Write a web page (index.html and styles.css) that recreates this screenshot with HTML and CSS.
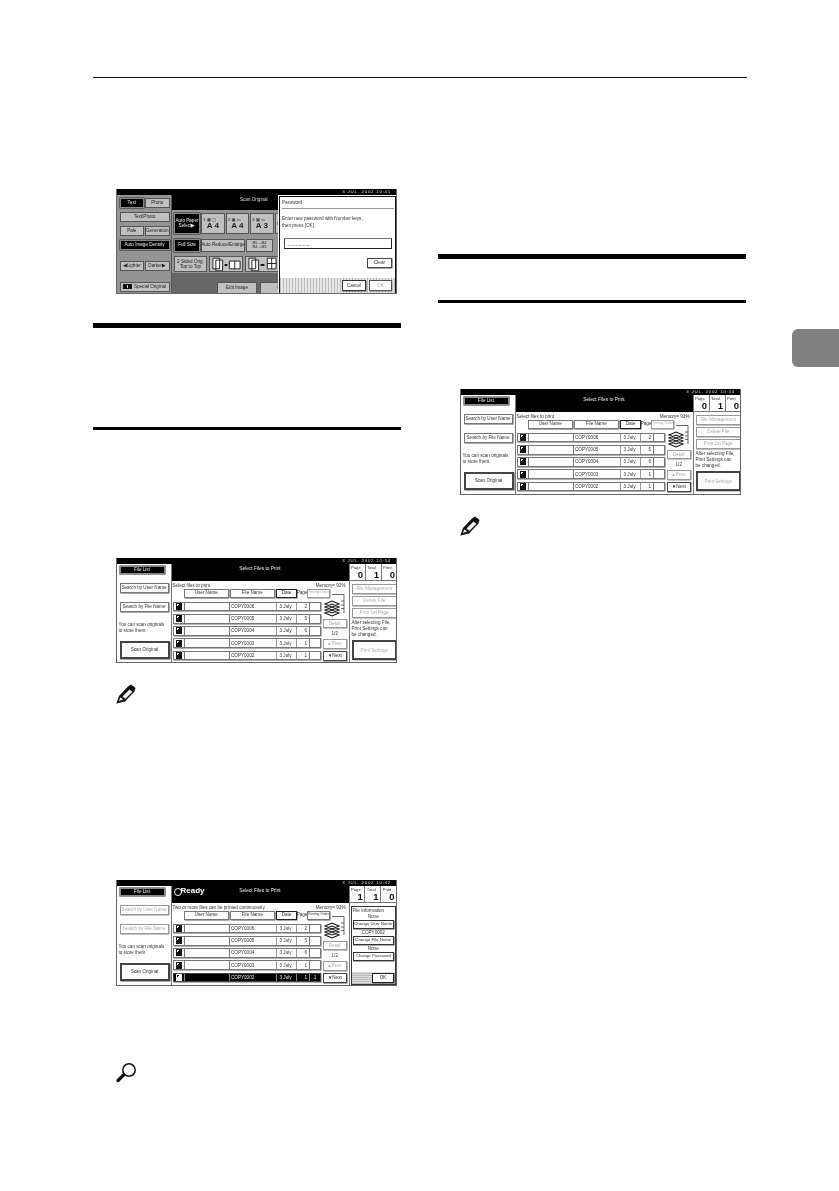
FILE: index.html
```html
<!DOCTYPE html>
<html lang="en">
<head>
<meta charset="utf-8">
<title>Select Files to Print</title>
<link rel="stylesheet" href="styles.css">
</head>
<body>
<div class="page">
  <div class="top-rule"></div>
  <div class="tab"></div>
  <div class="columns">
    <div class="col">
      <div class="screen pw shot-1">
        <div class="bar"><span>3 JUL. 2002 10:41</span></div>
        <div class="pw-main">
          <div class="pw-left">
            <div class="pw-line"><span class="b blk">Text</span><span class="b gr">Photo</span></div>
            <div class="pw-line"><span class="b gr wide">Text/Photo</span></div>
            <div class="pw-line"><span class="b gr">Pale</span><span class="b gr">Generation</span></div>
            <div class="pw-line"><span class="b blk wide">Auto Image Density</span></div>
            <div class="pw-line pw-gap2"><span class="b gr">◀Lighter</span><span class="b gr">Darker▶</span></div>
            <div class="pw-line pw-gap3"><span class="b gr wide"><i class="so-ic"></i>Special Original</span></div>
          </div>
          <div class="pw-mid">
            <div class="pw-head">Scan Original</div>
            <div class="pw-papers">
              <span class="b blk aps">Auto Paper<br>Select▶</span>
              <span class="b gr paper"><small>1 ▦ ▢</small>A 4</span>
              <span class="b gr paper"><small>2 ▦ ▭</small>A 4</span>
              <span class="b gr paper"><small>3 ▦ ▭</small>A 3</span>
              <span class="b gr paper"><small>T</small></span>
            </div>
            <div class="pw-sizes">
              <span class="b blk aps">Full Size</span>
              <span class="b gr are">Auto Reduce/Enlarge</span>
              <span class="b gr b5">B5→B4<br>R4→B5</span>
            </div>
            <div class="pw-sides">
              <span class="b gr two">2 Sided Orig.<br>Top to Top</span>
              <span class="b gr dup"><svg viewBox="0 0 33 15" width="33" height="15"><path class="pgi" d="M3 2h7v11H3zM6 4h7v11H6zM20 5h11v8H20zM25.500 5v8"/><path class="fl" d="M15 8h3v2h-3z"/></svg></span>
              <span class="b gr dup"><svg viewBox="0 0 33 15" width="33" height="15"><path class="pgi" d="M3 2h7v11H3zM6 4h7v11H6zM22 2h9v11H22zM22 7.500h9M26.500 2v11"/><path class="fl" d="M15 8h4v2h-4z"/></svg></span>
            </div>
            <div class="pw-bottom"><span class="b gr edit">Edit Image</span><span class="b gr cop">Co</span></div>
          </div>
        </div>
        <div class="dialog">
          <div class="d-title">Password</div>
          <div class="d-text">Enter new password with Number keys,<br>then press [OK].</div>
          <div class="d-input"><span>______</span></div>
          <div class="d-clear"><span class="b wh">Clear</span></div>
          <div class="d-foot"><span class="b wh">Cancel</span><span class="b wh dim">OK</span></div>
        </div>
      </div>
      <div class="rule-thick rule-a"></div>
      <div class="rule-thin rule-b"></div>

      <div class="screen fl-screen shot-2">
        <div class="bar"><span>3 JUL. 2002 10:34</span></div>
        <div class="fl-main">
          <div class="fl-left">
            <span class="b blk filelist">File List</span>
            <span class="b wh search s1">Search by User Name</span>
            <span class="b wh search s2">Search by File Name</span>
            <p class="hint">You can scan originals<br>to store them.</p>
            <span class="b wh scan">Scan Original</span>
          </div>
          <div class="fl-mid">
            <div class="fl-head"><span class="ready"></span><span class="head-title">Select Files to Print</span></div>
            <div class="info"><span>Select files to print.</span><span>Memory= 93%</span></div>
            <div class="cols"><span class="b wh h-user">User Name</span><span class="b wh h-file">File Name</span><span class="b wh h-date thick">Date</span><span class="h-page">Page</span><span class="b wh h-ord dim">Printing Order</span></div>
            <div class="fl-body">
              <div class="rows">
                <div class="row"><i class="ic"></i><span class="c-user"></span><span class="c-file">COPY0006</span><span class="c-date">3 July</span><span class="c-page">2</span><span class="c-ord"></span></div>
                <div class="row"><i class="ic"></i><span class="c-user"></span><span class="c-file">COPY0005</span><span class="c-date">3 July</span><span class="c-page">5</span><span class="c-ord"></span></div>
                <div class="row"><i class="ic"></i><span class="c-user"></span><span class="c-file">COPY0004</span><span class="c-date">3 July</span><span class="c-page">6</span><span class="c-ord"></span></div>
                <div class="row"><i class="ic"></i><span class="c-user"></span><span class="c-file">COPY0003</span><span class="c-date">3 July</span><span class="c-page">1</span><span class="c-ord"></span></div>
                <div class="row"><i class="ic"></i><span class="c-user"></span><span class="c-file">COPY0002</span><span class="c-date">3 July</span><span class="c-page">1</span><span class="c-ord"></span></div>
              </div>
              <div class="side">
                <svg class="stack" viewBox="0 0 24 26" width="24" height="26"><path class="ol" d="M9 1.500H21V20M21 8h-3M21 12h-3M21 15.500h-3"/><path class="st" d="M2 20l7-3 7 3-7 3zM2 17l7-3 7 3-7 3zM2 14l7-3 7 3-7 3zM2 11l7-3 7 3-7 3z"/></svg>
                <span class="b wh sb dim">Detail</span>
                <span class="pg">1/2</span>
                <span class="b wh sb dim">▲Prev.</span>
                <span class="b wh sb nx">▼Next</span>
              </div>
            </div>
          </div>
          <div class="fl-right">
            <div class="counts"><div><span>Page</span><b>0</b></div><div><span>Total</span><b>1</b></div><div><span>Print</span><b>0</b></div></div>
            <span class="b wh rb dim">File Management</span>
            <span class="b wh rb dim">Delete File</span>
            <span class="b wh rb dim">Print 1st Page</span>
            <p class="hint rh">After selecting File,<br>Print Settings can<br>be changed.</p>
            <span class="b wh scan ps dim">Print Settings</span>
          </div>
        </div>
      </div>
      <svg class="note n-left" viewBox="0 0 20 20" width="20" height="20"><path class="fl" d="M0.500 19.500L3 12 12 2.500 15 .5l4.500 3.500-1 3.500L9 17.500z"/><path class="hl" d="M6.500 12.500L13.500 5.500l3 2.300-7.200 7.200z"/><path class="hl" d="M2.800 17l1.500-3.800 3 2.300z"/><path class="fl" d="M.5 19.500l1-2.800 1.800 1.500z"/></svg>

      <div class="screen fl-screen shot-3">
        <div class="bar"><span>3 JUL. 2002 10:42</span></div>
        <div class="fl-main">
          <div class="fl-left">
            <span class="b blk filelist">File List</span>
            <span class="b wh search s1 dim">Search by User Name</span>
            <span class="b wh search s2 dim">Search by File Name</span>
            <p class="hint">You can scan originals<br>to store them.</p>
            <span class="b wh scan">Scan Original</span>
          </div>
          <div class="fl-mid">
            <div class="fl-head"><span class="ready on">Ready</span><span class="head-title">Select Files to Print</span></div>
            <div class="info"><span>Two or more files can be printed continuously.</span><span>Memory= 93%</span></div>
            <div class="cols"><span class="b wh h-user">User Name</span><span class="b wh h-file">File Name</span><span class="b wh h-date thick">Date</span><span class="h-page">Page</span><span class="b wh h-ord">Printing Order</span></div>
            <div class="fl-body">
              <div class="rows">
                <div class="row"><i class="ic"></i><span class="c-user"></span><span class="c-file">COPY0006</span><span class="c-date">3 July</span><span class="c-page">2</span><span class="c-ord"></span></div>
                <div class="row"><i class="ic"></i><span class="c-user"></span><span class="c-file">COPY0005</span><span class="c-date">3 July</span><span class="c-page">5</span><span class="c-ord"></span></div>
                <div class="row"><i class="ic"></i><span class="c-user"></span><span class="c-file">COPY0004</span><span class="c-date">3 July</span><span class="c-page">6</span><span class="c-ord"></span></div>
                <div class="row"><i class="ic"></i><span class="c-user"></span><span class="c-file">COPY0003</span><span class="c-date">3 July</span><span class="c-page">1</span><span class="c-ord"></span></div>
                <div class="row sel"><i class="ic"></i><span class="c-user"></span><span class="c-file">COPY0002</span><span class="c-date">3 July</span><span class="c-page">1</span><span class="c-ord">1</span></div>
              </div>
              <div class="side">
                <svg class="stack" viewBox="0 0 24 26" width="24" height="26"><path class="ol" d="M9 1.500H21V20M21 8h-3M21 12h-3M21 15.500h-3"/><path class="st" d="M2 20l7-3 7 3-7 3zM2 17l7-3 7 3-7 3zM2 14l7-3 7 3-7 3zM2 11l7-3 7 3-7 3z"/></svg>
                <span class="b wh sb dim">Detail</span>
                <span class="pg">1/2</span>
                <span class="b wh sb dim">▲Prev.</span>
                <span class="b wh sb nx">▼Next</span>
              </div>
            </div>
          </div>
          <div class="fl-right">
            <div class="counts"><div><span>Page</span><b>1</b></div><div><span>Total</span><b>1</b></div><div><span>Print</span><b>0</b></div></div>
            <div class="fileinfo">
              <span class="fi-title">File Information</span>
              <span class="fi-val">None</span>
              <span class="b wh fi-btn">Change User Name</span>
              <span class="fi-val">COPY0002</span>
              <span class="b wh fi-btn">Change File Name</span>
              <span class="fi-val">None</span>
              <span class="b wh fi-btn">Change Password</span>
              <div class="fi-foot"><span class="b wh fi-ok">OK</span></div>
            </div>
          </div>
        </div>
      </div>
      <svg class="note m-left" viewBox="0 0 24 22" width="24" height="22"><circle class="lens" cx="16" cy="7" r="6.200"/><path class="handle" d="M10.500 12L5 17.500"/><path class="handle2" d="M11.500 11L9 13.500"/></svg>
    </div>

    <div class="col">
      <div class="rule-thick rule-c"></div>
      <div class="rule-thin rule-d"></div>
      <div class="screen fl-screen shot-4">
        <div class="bar"><span>3 JUL. 2002 10:34</span></div>
        <div class="fl-main">
          <div class="fl-left">
            <span class="b blk filelist">File List</span>
            <span class="b wh search s1">Search by User Name</span>
            <span class="b wh search s2">Search by File Name</span>
            <p class="hint">You can scan originals<br>to store them.</p>
            <span class="b wh scan">Scan Original</span>
          </div>
          <div class="fl-mid">
            <div class="fl-head"><span class="ready"></span><span class="head-title">Select Files to Print</span></div>
            <div class="info"><span>Select files to print.</span><span>Memory= 93%</span></div>
            <div class="cols"><span class="b wh h-user">User Name</span><span class="b wh h-file">File Name</span><span class="b wh h-date thick">Date</span><span class="h-page">Page</span><span class="b wh h-ord dim">Printing Order</span></div>
            <div class="fl-body">
              <div class="rows">
                <div class="row"><i class="ic"></i><span class="c-user"></span><span class="c-file">COPY0006</span><span class="c-date">3 July</span><span class="c-page">2</span><span class="c-ord"></span></div>
                <div class="row"><i class="ic"></i><span class="c-user"></span><span class="c-file">COPY0005</span><span class="c-date">3 July</span><span class="c-page">5</span><span class="c-ord"></span></div>
                <div class="row"><i class="ic"></i><span class="c-user"></span><span class="c-file">COPY0004</span><span class="c-date">3 July</span><span class="c-page">6</span><span class="c-ord"></span></div>
                <div class="row"><i class="ic"></i><span class="c-user"></span><span class="c-file">COPY0003</span><span class="c-date">3 July</span><span class="c-page">1</span><span class="c-ord"></span></div>
                <div class="row"><i class="ic"></i><span class="c-user"></span><span class="c-file">COPY0002</span><span class="c-date">3 July</span><span class="c-page">1</span><span class="c-ord"></span></div>
              </div>
              <div class="side">
                <svg class="stack" viewBox="0 0 24 26" width="24" height="26"><path class="ol" d="M9 1.500H21V20M21 8h-3M21 12h-3M21 15.500h-3"/><path class="st" d="M2 20l7-3 7 3-7 3zM2 17l7-3 7 3-7 3zM2 14l7-3 7 3-7 3zM2 11l7-3 7 3-7 3z"/></svg>
                <span class="b wh sb dim">Detail</span>
                <span class="pg">1/2</span>
                <span class="b wh sb dim">▲Prev.</span>
                <span class="b wh sb nx">▼Next</span>
              </div>
            </div>
          </div>
          <div class="fl-right">
            <div class="counts"><div><span>Page</span><b>0</b></div><div><span>Total</span><b>1</b></div><div><span>Print</span><b>0</b></div></div>
            <span class="b wh rb dim">File Management</span>
            <span class="b wh rb dim">Delete File</span>
            <span class="b wh rb dim">Print 1st Page</span>
            <p class="hint rh">After selecting File,<br>Print Settings can<br>be changed.</p>
            <span class="b wh scan ps dim">Print Settings</span>
          </div>
        </div>
      </div>
      <svg class="note n-right" viewBox="0 0 20 20" width="20" height="20"><path class="fl" d="M0.500 19.500L3 12 12 2.500 15 .5l4.500 3.500-1 3.500L9 17.500z"/><path class="hl" d="M6.500 12.500L13.500 5.500l3 2.300-7.200 7.200z"/><path class="hl" d="M2.800 17l1.500-3.800 3 2.300z"/><path class="fl" d="M.5 19.500l1-2.800 1.800 1.500z"/></svg>
    </div>
  </div>
</div>
</body>
</html>
```

FILE: styles.css
```css
* { box-sizing: border-box; }
html, body { margin: 0; padding: 0; background: #fff; }
body { font-family: "Liberation Sans", Arial, sans-serif; color: #111; }
.page { position: relative; width: 839px; height: 1191px; overflow: hidden; padding: 77px 92px 0 93px; }
.top-rule { height: 1px; background: #111; }
.tab { position: absolute; left: 792px; top: 329px; width: 47px; height: 38px; background: #808080; border-radius: 6px 0 0 6px; }
.columns { display: grid; grid-template-columns: 308px 309px; column-gap: 37px; }
.col { display: flex; flex-direction: column; align-items: flex-start; }

.rule-thick { width: 308px; height: 5px; background: #000; }
.rule-thin { width: 308px; height: 3px; background: #000; }
.rule-a { margin-top: 29px; }
.rule-b { margin-top: 99px; }
.rule-c { margin-top: 176px; }
.rule-d { margin-top: 41px; }

.screen { position: relative; width: 281px; height: 105px; flex: none; border: 1px solid #666; border-top: 0; background: #fff; font-size: 4.6px; line-height: 1.1; color: #333; filter: blur(.4px); overflow: hidden; }
.shot-1 { margin: 111px 0 0 23px; }
.shot-2 { margin: 128px 0 0 23px; }
.shot-3 { margin: 176px 0 0 23px; height: 106px; }
.shot-4 { margin: 86px 0 0 22px; height: 106px; }

.bar { height: 6px; background: #000; color: #ddd; text-align: right; padding-right: 5px; font-size: 4.4px; line-height: 6px; letter-spacing: .75px; }

.b { display: flex; align-items: center; justify-content: center; text-align: center; white-space: nowrap; }
.blk { background: #000; color: #eee; border: 1px solid #888; box-shadow: 0 0 0 .5px #222; }
.gr { background: #c0c0c0; color: #222; border: 1px solid #555; }
.wh { background: #fff; color: #333; border: 1px solid #777; box-shadow: .5px .5px 0 #555; }
.dim { color: #aaa; border-color: #999; box-shadow: .5px .5px 0 #888; }
.thick { border-width: 1.500px; border-color: #222; }
.hint { margin: 0; white-space: nowrap; }
.note { display: block; flex: none; }
.fl { fill: #111; }
.hl { fill: #eee; }
.ol { fill: none; stroke: #444; stroke-width: .8; }
.st { fill: #fff; stroke: #111; stroke-width: 1.100; }
.pgi { fill: #fff; stroke: #222; stroke-width: 1; }
.lens { fill: #fff; stroke: #111; stroke-width: 1.500; }
.handle { stroke: #111; stroke-width: 3.200; stroke-linecap: round; fill: none; }
.handle2 { stroke: #111; stroke-width: 1.500; fill: none; }
.n-left { margin: 21px 0 0 23px; }
.n-right { margin: 21px 0 0 22px; }
.m-left { margin: 77px 0 0 20px; }

/* file list screens */
.fl-main { display: flex; height: 99px; }
.shot-3 .fl-main, .shot-4 .fl-main { height: 100px; }
.fl-left { width: 54.500px; flex: none; padding: 2px 0 0 2.500px; display: flex; flex-direction: column; align-items: flex-start; border-right: 1px solid #777; }
.filelist { width: 45px; height: 8px; }
.search { width: 49px; height: 9.500px; }
.s1 { margin-top: 9px; }
.s2 { margin-top: 9.500px; }
.fl-left .hint { margin: 10px 0 0 -1px; line-height: 6.500px; }
.scan { width: 50px; height: 18.500px; border: 2.500px solid #444; margin-top: 6px; }

.fl-mid { width: 178px; flex: none; display: flex; flex-direction: column; border-right: 1px solid #777; }
.fl-head { height: 17px; background: #000; color: #eee; display: flex; position: relative; justify-content: center; padding-top: 1.500px; }
.head-title { font-size: 4.8px; }
.ready { position: absolute; left: 1px; top: 0; color: #fff; font-size: 8px; font-weight: 700; line-height: 9px; padding-left: 8px; }
.ready.on::before { content: ""; position: absolute; left: 1px; top: 1.500px; width: 6px; height: 6px; border: 1px solid #fff; border-radius: 50%; }
.info { display: flex; justify-content: space-between; padding: 1.500px 3px 0 1px; height: 7.500px; white-space: nowrap; }
.cols { display: flex; height: 9px; padding-left: 12.500px; align-items: stretch; }
.h-user, .h-file { width: 44.500px; margin-right: 1.500px; flex: none; }
.h-date { width: 21px; flex: none; }
.h-page { width: 10px; flex: none; display: flex; align-items: center; justify-content: center; }
.h-ord { width: 23px; flex: none; font-size: 3.300px; position: relative; z-index: 1; }
.fl-body { display: flex; padding: 4px 0 0 1.500px; }
.rows { width: 148px; flex: none; display: flex; flex-direction: column; gap: 2.500px; }
.row { height: 9.800px; display: flex; border: 1px solid #777; background: #fff; align-items: stretch; box-shadow: .5px .5px 0 #666; }
.row > * { display: flex; align-items: center; }
.ic { width: 11px; flex: none; border-right: 1px solid #777; justify-content: center; position: relative; }
.ic::after { content: ""; width: 4px; height: 5px; background: linear-gradient(135deg, #fff 30%, #111 30%); border: .7px solid #111; }
.c-user { width: 45px; border-right: 1px solid #777; }
.c-file { width: 46.500px; border-right: 1px solid #999; padding-left: 1px; }
.c-date { width: 20px; border-right: 1px solid #999; padding-left: 3px; }
.c-page { width: 13.500px; justify-content: flex-end; padding-right: 2px; border-right: 1px solid #777; }
.c-ord { flex: 1; justify-content: center; }
.sel { background: #000; color: #eee; border-color: #444; }
.sel > * { border-color: #888; }
.sel .ic::after { background: linear-gradient(135deg, #000 30%, #fff 30%); border-color: #fff; }
.side { flex: 1; padding-left: 1.500px; display: flex; flex-direction: column; align-items: flex-start; }
.stack { margin-top: -9px; flex: none; }
.sb { width: 24.500px; height: 9.800px; flex: none; }
.sb.nx { color: #222; border-color: #444; margin-top: 2.500px; }
.pg { width: 24.500px; height: 10.500px; display: flex; align-items: center; justify-content: center; }

.fl-right { flex: 1; display: flex; flex-direction: column; align-items: flex-start; }
.counts { display: flex; height: 17px; width: 100%; background: #fff; border-bottom: 1px solid #777; }
.counts > div { flex: 1; border-right: 1px solid #777; position: relative; padding: 1.500px 0 0 1.500px; font-size: 4.200px; }
.counts > div:last-child { border-right: 0; }
.counts b { position: absolute; right: 1.500px; bottom: 0; font-size: 9.500px; line-height: 10px; color: #111; }
.rb { width: 44.500px; height: 9.500px; margin: 3px 0 0 2.500px; }
.rb + .rb { margin-top: 2.500px; }
.rh { margin: 2.500px 0 0 2px; line-height: 5.800px; }
.scan.ps { width: 44.500px; height: 20px; margin: 3px 0 0 2.500px; border-color: #444; }

.fileinfo { margin: 2.500px 0 1px 1px; width: 45.500px; flex: 1; border: 1.500px solid #333; display: flex; flex-direction: column; align-items: center; }
.fi-title { width: 100%; padding: 1px 0 0 1px; height: 7px; }
.fi-val { height: 6.500px; display: flex; align-items: center; }
.fi-btn { width: 40.500px; height: 9px; font-size: 4.300px; border-color: #333; margin-bottom: .5px; }
.fi-foot { margin-top: auto; width: 100%; height: 12px; display: flex; justify-content: flex-end; align-items: center; padding-right: 1px; background: repeating-linear-gradient(0deg, #bbb 0 1px, #ddd 1px 2px), #ccc; }
.fi-ok { width: 22px; height: 10px; border: 1.500px solid #222; color: #222; }

/* password screen */
.pw-main { display: flex; height: 99px; background: #949494; }
.pw-left { width: 55px; flex: none; padding: 2.500px 0 0 2.500px; display: flex; flex-direction: column; gap: 4px; border-right: 1px solid #555; }
.pw-line { display: flex; gap: 1px; height: 10px; }
.pw-line .b { width: 24.500px; }
.pw-line .b.wide { width: 50px; }
.so-ic { width: 9px; height: 5px; margin-right: 2px; border: 1px solid #111; background: linear-gradient(90deg, #111 0 40%, #ccc 40% 60%, #111 60%); }
.pw-gap2 { margin-top: 7px; }
.pw-gap3 { margin-top: 7px; }
.pw-mid { flex: 1; display: flex; flex-direction: column; }
.pw-head { height: 15px; background: #000; color: #ddd; padding: 1.500px 0 0 68px; }
.pw-papers { display: flex; gap: 1px; height: 21px; margin: 2.500px 0 0 2px; }
.aps { width: 26px; flex: none; }
.paper { width: 23.500px; flex: none; flex-direction: column; font-size: 8px; line-height: 8px; font-weight: 700; color: #222; }
.paper small { font-size: 4.200px; line-height: 5px; font-weight: 400; align-self: flex-start; padding-left: 1px; font-family: "DejaVu Sans", sans-serif; }
.pw-sizes { display: flex; gap: 1px; height: 13px; margin: 5px 0 0 2px; }
.are { width: 44px; }
.b5 { width: 27px; font-size: 4px; }
.pw-sides { display: flex; gap: 2px; height: 15.500px; margin: 4.500px 0 0 2px; }
.two { width: 33px; }
.dup { width: 34px; }
.pw-bottom { flex: 1; margin-top: 1.500px; background: #666; display: flex; align-items: flex-end; padding: 0 0 1px 45px; gap: 3px; }
.edit { width: 40px; height: 11px; border-bottom: 0; }
.cop { width: 40px; height: 11px; border-bottom: 0; }
.dialog { position: absolute; left: 162px; top: 7px; width: 117px; height: 98px; background: #fff; border: 1.500px solid #111; outline: 1px solid #fff; display: flex; flex-direction: column; }
.d-title { margin: 3px 1px 0 2px; padding-bottom: 3px; border-bottom: 1px solid #999; height: 9px; }
.d-text { margin: 7px 0 0 2px; line-height: 6.500px; white-space: nowrap; }
.d-input { margin: 9px 3px 0 3.500px; height: 11px; border: 1.500px solid #222; border-top-color: #777; border-left-color: #444; padding: 1px 0 0 3px; line-height: 7px; font-size: 5px; letter-spacing: 1px; }
.d-clear { display: flex; justify-content: flex-end; margin: 9px 3px 0 0; }
.d-clear .b { width: 25px; height: 10px; border-color: #444; }
.d-foot { margin-top: auto; height: 15px; display: flex; justify-content: flex-end; align-items: center; gap: 3px; padding-right: 3px; background: repeating-linear-gradient(90deg, #bbb 0 1px, #e6e6e6 1px 3px), #ccc; }
.d-foot .b { width: 24px; height: 10.500px; border-color: #333; }
.d-foot .dim { width: 23px; border-color: #555; }
```
